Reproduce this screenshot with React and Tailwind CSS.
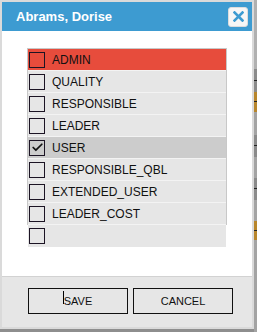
import { Check } from 'lucide-react'

const roles = [
  { name: 'ADMIN', tone: 'alert' },
  { name: 'QUALITY' },
  { name: 'RESPONSIBLE' },
  { name: 'LEADER' },
  { name: 'USER', checked: true, tone: 'active' },
  { name: 'RESPONSIBLE_QBL' },
  { name: 'EXTENDED_USER' },
  { name: 'LEADER_COST' },
]

function Box({ checked }) {
  return (
    <span className="w-[16px] h-[16px] shrink-0 border border-[#1c1424] flex items-center justify-center">
      {checked && <Check size={13} strokeWidth={3.2} className="text-[#111]" />}
    </span>
  )
}

function RoleRow({ name, checked, tone }) {
  const bg =
    tone === 'alert' ? 'bg-[#e74c3c]' : tone === 'active' ? 'bg-[#cccccc]' : 'bg-[#e6e6e6]'
  return (
    <div className={`${bg} h-[22px] border-b border-[#f3f3f3] flex items-center gap-[7px] pl-[1px] text-[12px] text-[#111]`}>
      <Box checked={checked} />
      <span className="leading-none">{name}</span>
    </div>
  )
}

export default function App() {
  return (
    <div className="relative w-[257px] h-[332px] bg-[#8e8e8e] overflow-hidden font-['Liberation_Sans',Arial,sans-serif]">
      {/* page behind the dialog peeking out on the right */}
      <div className="absolute right-0 top-0 w-[3px] h-full flex flex-col bg-[#a3a3a3]">
        <div className="h-[69px] bg-[#b0b0b0]" />
        <div className="h-[12px] bg-[#8a8a8a] border-b border-[#222]" />
        <div className="h-[11px] bg-[#8a8a8a]" />
        <div className="h-[10px] bg-[#b8862b] border-b border-[#222]" />
        <div className="h-[10px] bg-[#b8862b]" />
        <div className="h-[23px] bg-[#a3a3a3]" />
        <div className="h-[11px] bg-[#8a8a8a] border-b border-[#222]" />
        <div className="h-[11px] bg-[#8a8a8a]" />
        <div className="h-[21px] bg-[#a3a3a3]" />
        <div className="h-[11px] bg-[#8a8a8a] border-b border-[#222]" />
        <div className="h-[11px] bg-[#8a8a8a]" />
        <div className="h-[21px] bg-[#a3a3a3]" />
        <div className="h-[10px] bg-[#b8862b] border-b border-[#222]" />
        <div className="h-[9px] bg-[#b8862b]" />
      </div>

      <div className="absolute left-0 top-0 w-[254px] h-[329px] bg-[#dadada] p-[2px] flex flex-col">
        <div className="h-[29px] shrink-0 bg-[#3d9bd1] flex items-center justify-between pl-[14px] pr-[4px]">
          <span className="text-white font-bold text-[13px] leading-none">Abrams, Dorise</span>
          <button className="w-[20px] h-[20px] rounded-[3px] bg-[#f6f6f6] border border-[#dcdcdc] flex items-center justify-center">
            <svg width="11" height="11" viewBox="0 0 11 11">
              <path d="M1.5 1.5 L9.5 9.5 M9.5 1.5 L1.5 9.5" stroke="#3d9bd1" strokeWidth="2.6" strokeLinecap="square" />
            </svg>
          </button>
        </div>

        <div className="flex-1 bg-white pt-[17px] pl-[25px]">
          <div className="w-[200px] border-x border-t border-[#c8c8c8]">
            {roles.map(r => <RoleRow key={r.name} {...r} />)}
          </div>
          <div className="w-[198px] ml-[1px] h-[22px] bg-[#e6e6e6] flex items-center pl-[1px]">
            <Box />
          </div>
        </div>

        <div className="h-[51px] shrink-0 bg-[#e6e6e6] border-t border-[#d2d2d2] flex gap-[5px] pl-[26px] pt-[11px]">
          <button className="relative w-[100px] h-[26px] border border-[#111] bg-[#e6e6e6] text-[11px] text-[#111] flex items-center justify-center">
            <span className="relative">
              <span className="absolute left-[-1px] top-[-2px] w-[1px] h-[13px] bg-black" />
              SAVE
            </span>
          </button>
          <button className="w-[100px] h-[26px] border border-[#111] bg-[#e6e6e6] text-[11px] text-[#111] flex items-center justify-center">
            CANCEL
          </button>
        </div>
      </div>
    </div>
  )
}
